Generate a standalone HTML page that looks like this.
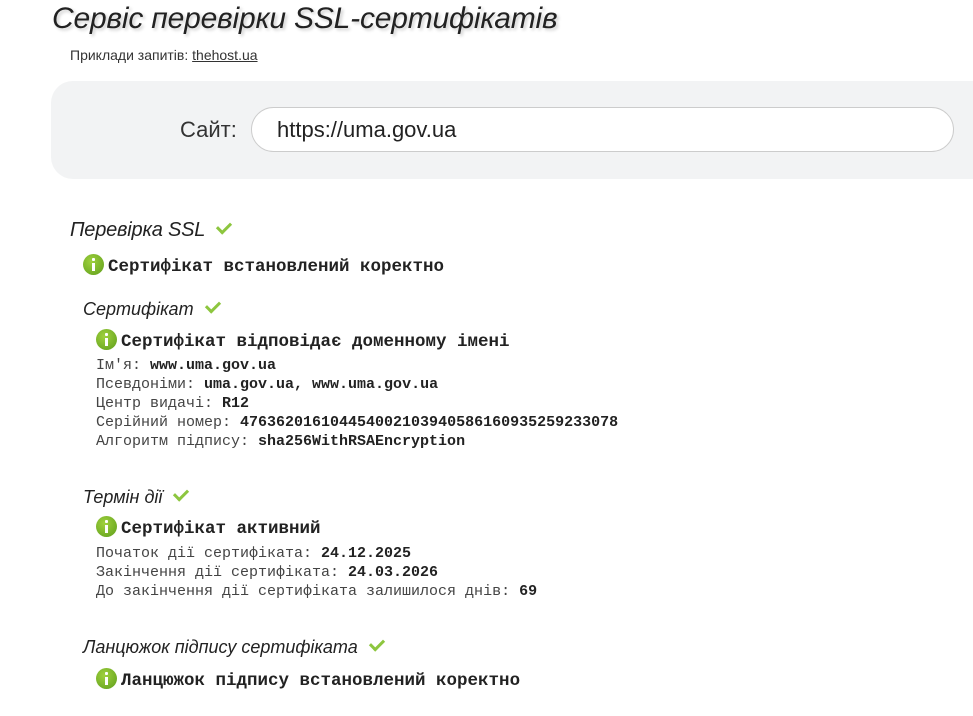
<!DOCTYPE html>
<html><head><meta charset="utf-8"><style>
body{margin:0;background:#fff;width:973px;height:716px;overflow:hidden;font-family:"Liberation Sans",sans-serif;color:#222;position:relative}
.a{position:absolute;white-space:nowrap}
h1{position:absolute;left:52px;top:2px;margin:0;font-size:30px;font-style:italic;font-weight:normal;color:#222;text-shadow:2px 2px 3px #ccc;letter-spacing:-0.2px}
.it{font-style:italic;color:#222}
.m{font-family:"Liberation Mono",monospace;font-weight:bold;color:#222}
.d{font-family:"Liberation Mono",monospace;font-size:15px;color:#444;line-height:19px}
.d b{color:#222}
.i{display:inline-block;width:21px;height:21px;border-radius:50%;background:radial-gradient(circle at 40% 35%,#9fd13e,#5e9d1a);vertical-align:-4px;margin-right:4px;position:relative}
.i:before{content:"";position:absolute;left:9px;top:4px;width:3px;height:3px;background:#fff;border-radius:1px}
.i:after{content:"";position:absolute;left:9px;top:9px;width:3px;height:8px;background:#fff}
.c{display:inline-block;width:11px;height:6px;border-left:3px solid #8dc63f;border-bottom:3px solid #8dc63f;transform:rotate(-45deg);margin-left:12px;vertical-align:5px}
</style></head><body>
<h1>Сервіс перевірки SSL-сертифікатів</h1>
<div class="a" style="left:70px;top:47px;font-size:14px;color:#333">Приклади запитів: <span style="text-decoration:underline">thehost.ua</span></div>
<div class="a" style="left:51px;top:81px;width:922px;height:98px;background:#f2f3f4;border-radius:22px 0 0 22px"></div>
<div class="a" style="left:180px;top:117px;font-size:22px;color:#333">Сайт:</div>
<div class="a" style="left:251px;top:107px;width:701px;height:43px;border:1px solid #ccc;border-radius:23px;background:#fff"></div>
<div class="a" style="left:277px;top:117px;font-size:22px;color:#222">https://uma.gov.ua</div>

<div class="a it" style="left:70px;top:219px;font-size:20px;letter-spacing:-0.2px">Перевірка SSL<span class="c"></span></div>
<div class="a m" style="left:83px;top:254px;font-size:17.5px"><span class="i"></span>Сертифікат встановлений коректно</div>

<div class="a it" style="left:83px;top:299px;font-size:18px">Сертифікат<span class="c"></span></div>
<div class="a m" style="left:96px;top:329px;font-size:17.5px"><span class="i"></span>Сертифікат відповідає доменному імені</div>
<div class="a d" style="left:96px;top:356px">Ім'я: <b>www.uma.gov.ua</b><br>Псевдоніми: <b>uma.gov.ua, www.uma.gov.ua</b><br>Центр видачі: <b>R12</b><br>Серійний номер: <b>476362016104454002103940586160935259233078</b><br>Алгоритм підпису: <b>sha256WithRSAEncryption</b></div>

<div class="a it" style="left:83px;top:487px;font-size:18px">Термін дії<span class="c"></span></div>
<div class="a m" style="left:96px;top:516px;font-size:17.5px"><span class="i"></span>Сертифікат активний</div>
<div class="a d" style="left:96px;top:544px">Початок дії сертифіката: <b>24.12.2025</b><br>Закінчення дії сертифіката: <b>24.03.2026</b><br>До закінчення дії сертифіката залишилося днів: <b>69</b></div>

<div class="a it" style="left:83px;top:637px;font-size:18px">Ланцюжок підпису сертифіката<span class="c"></span></div>
<div class="a m" style="left:96px;top:668px;font-size:17.5px"><span class="i"></span>Ланцюжок підпису встановлений коректно</div>
</body></html>
